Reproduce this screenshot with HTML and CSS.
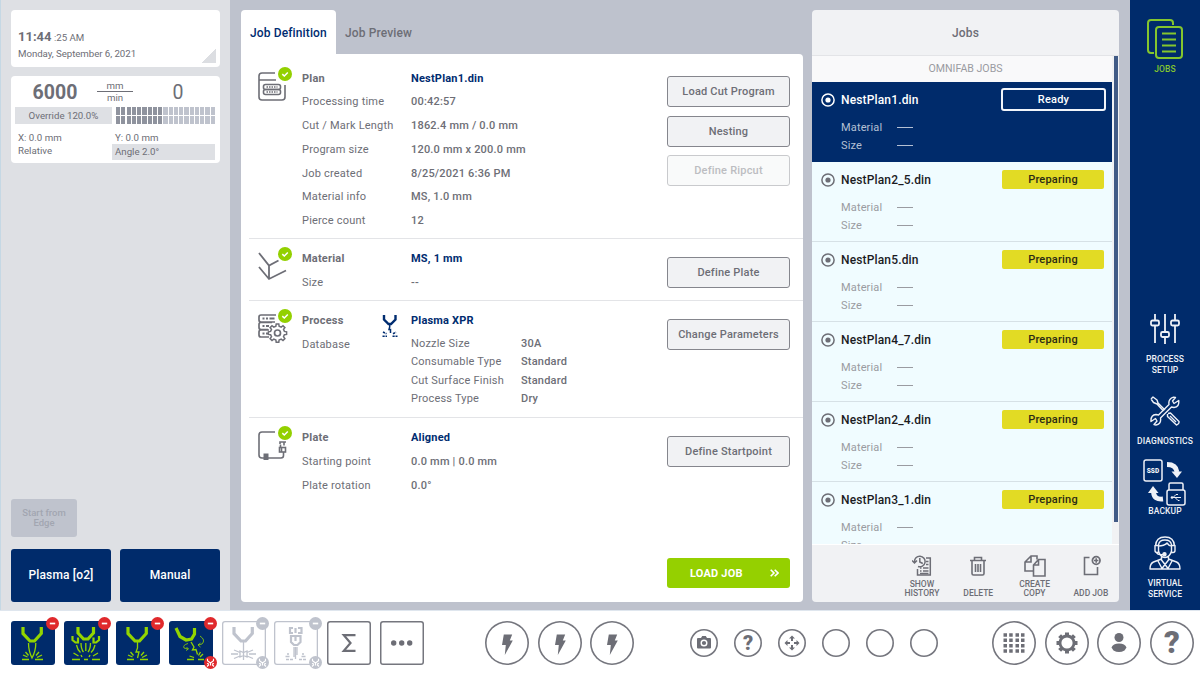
FILE: index.html
```
<!DOCTYPE html>
<html lang="en">
<head>
    <meta charset="UTF-8">
    <meta name="viewport" content="width=device-width, initial-scale=1.0">
    <title>Jobs</title>
    <link rel="stylesheet" href="styles.css">
</head>
<body>
    <svg class="defs" width="0" height="0">
        <symbol id="check" viewBox="0 0 14 14"><circle cx="7" cy="7" r="7" fill="#93d000"/><path d="M4.3 7.1l2 1.9 3.5-3.6" fill="none" stroke="#fff" stroke-width="1.5"/></symbol>
        <symbol id="radio" viewBox="0 0 14 14"><circle cx="7" cy="7" r="6.1" fill="none" stroke="currentColor" stroke-width="1.5"/><circle cx="7" cy="7" r="2.6" fill="currentColor"/></symbol>
        <symbol id="bolt" viewBox="0 0 44 44"><path d="M18.800 13.500H27.200L24.800 19.500H27.800L19.800 34L20.800 24H17Z" fill="currentColor"/></symbol>
        <symbol id="off" viewBox="0 0 13 13"><circle cx="6.500" cy="6.500" r="6.500" fill="currentColor"/><path d="M3.800 6.500h5.400" stroke="#fff" stroke-width="1.700"/></symbol>
        <symbol id="fault" viewBox="0 0 13 13"><circle cx="6.500" cy="6.500" r="6.500" fill="currentColor"/><path d="M3.500 2.800v2l3 2.200 3-2.200v-2M6.500 7v2.500M3 10.500l2-2M10 10.500l-2-2M3 7.500l2 .5M10 7.500l-2 .5" fill="none" stroke="#fff" stroke-width="1.100"/></symbol>
    </svg>

    <div class="main">
        <div class="left">
            <div class="card clock">
                <p><b>11:44</b> :25 AM</p>
                <p class="date">Monday, September 6, 2021</p>
                <span class="corner"></span>
            </div>
            <div class="card speed">
                <div class="speed-top">
                    <span class="set">6000</span>
                    <span class="unit"><i>mm</i><i>min</i></span>
                    <span class="actual">0</span>
                </div>
                <div class="speed-row">
                    <div class="override">Override 120.0%</div>
                    <div class="meter"><div></div><div></div></div>
                </div>
                <div class="coords">
                    <span>X: 0.0 mm</span><span>Y: 0.0 mm</span>
                    <span>Relative</span><span class="angle">Angle 2.0°</span>
                </div>
            </div>
            <button class="edge">Start from<br>Edge</button>
            <div class="modes">
                <button>Plasma [o2]</button>
                <button>Manual</button>
            </div>
        </div>

        <div class="center">
            <div class="job">
                <div class="tabs">
                    <div class="tab active">Job Definition</div>
                    <div class="tab">Job Preview</div>
                </div>
                <div class="panel">
                    <div class="section plan">
                        <div class="icon">
                            <svg width="30" height="32" viewBox="0 0 30 32" fill="none" stroke="#6d6e76" stroke-width="1.600"><path d="M17 1H4Q1 1 1 4V25Q1 28 4 28H24Q27 28 27 25V13M1 8H18"/><rect x="5.500" y="12.500" width="17" height="5" rx="2"/><rect x="5.500" y="17.500" width="17" height="5" rx="2"/><path d="M8.500 15h11M8.500 20h11" stroke-dasharray="1.500 1"/></svg>
                            <svg class="check"><use href="#check"/></svg>
                        </div>
                        <div class="labels"><b>Plan</b><span>Processing time</span><span>Cut / Mark Length</span><span>Program size</span><span>Job created</span><span>Material info</span><span>Pierce count</span></div>
                        <div class="values"><b>NestPlan1.din</b><span>00:42:57</span><span>1862.4 mm / 0.0 mm</span><span>120.0 mm x 200.0 mm</span><span>8/25/2021 6:36 PM</span><span>MS, 1.0 mm</span><span>12</span></div>
                        <div class="actions"><button>Load Cut Program</button><button>Nesting</button><button disabled>Define Ripcut</button></div>
                    </div>
                    <div class="section material">
                        <div class="icon">
                            <svg width="30" height="32" viewBox="0 0 30 32" fill="none" stroke="#6d6e76" stroke-width="1.800"><path d="M1 1L11 13.500L20.500 8.500M11 13.500V27M1 15L11 27L28 18.500"/></svg>
                            <svg class="check"><use href="#check"/></svg>
                        </div>
                        <div class="labels"><b>Material</b><span>Size</span></div>
                        <div class="values"><b>MS, 1 mm</b><span>--</span></div>
                        <div class="actions"><button>Define Plate</button></div>
                    </div>
                    <div class="section process">
                        <div class="icon">
                            <svg width="30" height="32" viewBox="0 0 30 32" fill="none" stroke="#6d6e76" stroke-width="1.700"><path d="M18 1H3Q1 1 1 3V6Q1 8 3 8H17M14 8.500H3Q1 8.500 1 10.500V13.500Q1 15.500 3 15.500H10M11 16H3Q1 16 1 18V21Q1 23 3 23H11"/><path d="M4.500 4.500h2M8 4.500h2M11.500 4.500h5M4.500 12h2M8 12h3M4.500 19.500h2M8 19.500h2" stroke-width="2.200"/><circle cx="19.500" cy="19" r="3"/><path d="M17.900 12.200L18.200 10h2.600l.3 2.200 2.100.9 1.800-1.400 1.900 1.900-1.400 1.800.9 2 2.200.4v2.600l-2.200.3-.9 2 1.400 1.900-1.900 1.900-1.800-1.400-2.100.9-.3 2.200h-2.600l-.3-2.200-2.100-.9-1.800 1.400-1.900-1.900 1.400-1.900-.9-2-2.200-.3v-2.600l2.200-.4.9-2-1.400-1.800 1.900-1.900 1.800 1.400z" stroke-width="1.500"/></svg>
                            <svg class="check"><use href="#check"/></svg>
                        </div>
                        <div class="labels"><b>Process</b><span>Database</span></div>
                        <div class="torch">
                            <svg width="16" height="24" viewBox="0 0 16 24" fill="none" stroke="#002c70"><path d="M2 1V5.500L6.500 10H9L13.500 5.500V1" stroke-width="2.400"/><path d="M7.700 10V13L7 15.500H8.500V19" stroke-width="1.500"/><path d="M1 18l3.500 1.800M.5 22.300h4.500M11 19.800l3-1.500M10.500 22.300h5" stroke-width="1.600" stroke-dasharray="2.200 .8"/></svg>
                        </div>
                        <div class="values">
                            <b>Plasma XPR</b>
                            <div class="params">
                                <i>Nozzle Size</i><span>30A</span>
                                <i>Consumable Type</i><span>Standard</span>
                                <i>Cut Surface Finish</i><span>Standard</span>
                                <i>Process Type</i><span>Dry</span>
                            </div>
                        </div>
                        <div class="actions"><button>Change Parameters</button></div>
                    </div>
                    <div class="section plate">
                        <div class="icon">
                            <svg width="30" height="32" viewBox="0 0 30 32" fill="none" stroke="#6d6e76" stroke-width="1.600"><path d="M17 1H4Q1 1 1 4V24Q1 27 4 27H6M10 27H23Q25.500 27 25.500 24.500V21M28 11H22V13M22.500 13.500v3M26 11.500v3"/><path d="M5.500 22.500h5v6.500h-5z" fill="#6d6e76" stroke="none"/><rect x="21.500" y="16.500" width="6" height="4.500"/><path d="M23.500 16.500v4.500"/></svg>
                            <svg class="check"><use href="#check"/></svg>
                        </div>
                        <div class="labels"><b>Plate</b><span>Starting point</span><span>Plate rotation</span></div>
                        <div class="values"><b>Aligned</b><span>0.0 mm | 0.0 mm</span><span>0.0°</span></div>
                        <div class="actions"><button>Define Startpoint</button></div>
                    </div>
                    <button class="load">LOAD JOB
                        <svg width="9" height="8" viewBox="0 0 9 8" fill="none" stroke="#fff" stroke-width="1.600"><path d="M.7.700L4 4L.7 7.300M4.700.700L8 4L4.700 7.300"/></svg>
                    </button>
                </div>
            </div>

            <div class="jobs">
                <div class="jobs-title">Jobs</div>
                <div class="jobs-body">
                    <div class="list">
                        <div class="group">OMNIFAB JOBS</div>
                        <div class="item selected">
                            <svg class="radio"><use href="#radio"/></svg><span class="name">NestPlan1.din</span><span class="status">Ready</span>
                            <div class="meta"><span>Material</span><hr><span>Size</span><hr></div>
                        </div>
                        <div class="item">
                            <svg class="radio"><use href="#radio"/></svg><span class="name">NestPlan2_5.din</span><span class="status">Preparing</span>
                            <div class="meta"><span>Material</span><hr><span>Size</span><hr></div>
                        </div>
                        <div class="item">
                            <svg class="radio"><use href="#radio"/></svg><span class="name">NestPlan5.din</span><span class="status">Preparing</span>
                            <div class="meta"><span>Material</span><hr><span>Size</span><hr></div>
                        </div>
                        <div class="item">
                            <svg class="radio"><use href="#radio"/></svg><span class="name">NestPlan4_7.din</span><span class="status">Preparing</span>
                            <div class="meta"><span>Material</span><hr><span>Size</span><hr></div>
                        </div>
                        <div class="item">
                            <svg class="radio"><use href="#radio"/></svg><span class="name">NestPlan2_4.din</span><span class="status">Preparing</span>
                            <div class="meta"><span>Material</span><hr><span>Size</span><hr></div>
                        </div>
                        <div class="item">
                            <svg class="radio"><use href="#radio"/></svg><span class="name">NestPlan3_1.din</span><span class="status">Preparing</span>
                            <div class="meta"><span>Material</span><hr><span>Size</span><hr></div>
                        </div>
                    </div>
                    <div class="scrollbar"></div>
                </div>
                <div class="tools">
                    <div class="tool">
                        <svg width="20" height="22" viewBox="0 0 20 22" fill="none" stroke="#6d6e76" stroke-width="1.500"><path d="M2.500 7A5.300 5.300 0 1 1 6 11.500M7.800 3v4l3 1.500M0 5.500l2.500 2.500L5 5.500M14 3h4.300V20H5.500v-6"/><path d="M14 6.500h2.500M14 9.500h2.500M8 13h1.500M11 13h5.500M8 16h1.500M11 16h5.500M8 18.500h8.500" stroke-width="1.700"/></svg>
                        <span>SHOW<br>HISTORY</span>
                    </div>
                    <div class="tool">
                        <svg width="20" height="22" viewBox="0 0 20 22" fill="none" stroke="#6d6e76" stroke-width="1.600"><path d="M2 5.500h16M6.500 5V2.500h7V5M4 6V18.500q0 1.500 1.500 1.500h9q1.500 0 1.500-1.500V6M7.500 9v8M10 9v8M12.500 9v8"/></svg>
                        <span>DELETE</span>
                    </div>
                    <div class="tool">
                        <svg width="22" height="22" viewBox="0 0 22 22" fill="none" stroke="#6d6e76" stroke-width="1.600"><path d="M9 16H1V7L7 1h6v3.500M7 1v6H1"/><path d="M14.500 4.500H21V21H9.500V10z M14.500 4.500v5.500H9.500" fill="#f1f2f4"/></svg>
                        <span>CREATE<br>COPY</span>
                    </div>
                    <div class="tool">
                        <svg width="20" height="22" viewBox="0 0 20 22" fill="none" stroke="#6d6e76" stroke-width="1.600"><path d="M8.500 2.500H3.500V19.500H16.500V12"/><circle cx="15.200" cy="5.500" r="3.800" stroke-width="1.800"/><path d="M15.200 3.300v4.400M13 5.500h4.400"/></svg>
                        <span>ADD JOB</span>
                    </div>
                </div>
            </div>
        </div>

        <div class="nav">
            <div class="nav-item current">
                <svg width="36" height="40" viewBox="0 0 36 40" fill="none" stroke="#84c62e" stroke-width="2"><path d="M7 34H4Q1 34 1 31V4Q1 1 4 1H23Q26 1 26 4V6"/><rect x="9" y="8" width="26" height="31" rx="3"/><path d="M15 14.500h14M15 20.500h14M15 26.500h14M15 32.500h14"/></svg>
                <span>JOBS</span>
            </div>
            <div class="nav-item setup">
                <svg width="30" height="32" viewBox="0 0 30 32" fill="none" stroke="#eef1f7" stroke-width="1.800"><path d="M5 1v6M5 13v17M15 1v18M15 25v6M25 1v6M25 13v17"/><rect x="1" y="7.500" width="8" height="5" rx="1.500"/><rect x="11" y="19" width="8" height="5" rx="1.500"/><rect x="21" y="7.500" width="8" height="5" rx="1.500"/></svg>
                <span>PROCESS<br>SETUP</span>
            </div>
            <div class="nav-item diag">
                <svg width="30" height="30" viewBox="0 0 30 30" fill="none" stroke="#eef1f7" stroke-width="1.400" stroke-linejoin="round"><path d="M19 8.500Q18 3 23.500 1.200L25.500 1.500L22.500 5L24 7.500L28.700 4.500Q29.500 11 24 11.500L21.500 11L10.500 22Q11.500 28 6 29L4 28.500L7 25L5.500 22.500L1 25.500Q.5 19 6 18.500L8.500 19z"/><path d="M1 3L3 1L7 4L8 7L15 14M1 3L3.500 6.500L7 8L13.500 15M18 17.500L20.500 17L29 25.500Q29.500 28 26.500 29L17.500 20.500V18M20 20L26 26"/></svg>
                <span>DIAGNOSTICS</span>
            </div>
            <div class="nav-item backup">
                <svg width="44" height="48" viewBox="0 0 44 48" fill="none" stroke="#eef1f7" stroke-width="1.500"><rect x="1" y="1" width="18" height="21" rx="2"/><text x="10" y="14" class="ssd">SSD</text><path d="M24 5.500Q33 5.500 34 13" stroke-width="4.800"/><path d="M28.500 12.500H39L34 19z" fill="#eef1f7" stroke="none"/><path d="M20 40Q11 41 10.500 33" stroke-width="4.800"/><path d="M5 34h10.500L10 27z" fill="#eef1f7" stroke="none"/><rect x="24" y="31" width="18" height="15" rx="2"/><path d="M26 31V25.500Q26 24 27.500 24H38.500Q40 24 40 25.500V31"/><path d="M28 38.500h10M30 38.500l3-3h2M32 38.500l3 3h1.500" stroke-width="1"/><circle cx="29" cy="38.500" r="1.300" fill="#eef1f7" stroke="none"/></svg>
                <span>BACKUP</span>
            </div>
            <div class="nav-item virtual">
                <svg width="32" height="34" viewBox="0 0 32 34" fill="none" stroke="#eef1f7" stroke-width="1.400" stroke-linejoin="round"><path d="M6.500 10Q7 1 16 1Q25 1 25.500 10M9.500 9Q10 4 16 4Q22 4 22.500 9M6 9.500h3.500v7H8Q6 16.500 6 14.500zM26 9.500h-3.500v7H24Q26 16.500 26 14.500zM9.500 10Q15 10 18 7Q20 10 22.500 10V15Q21 21 16 21.500Q11 21 9.500 15M7.500 17Q9 19.500 14 18.500M12.500 20v4L16 28.500L19.500 24v-4M12.500 23L4.500 26Q1 27.500 1 33H31Q31 27.500 27.500 26L19.500 23M9 25l4 7.500L16 28.500L19 32.500L23 25"/><circle cx="15.500" cy="18.200" r="1.500" fill="#eef1f7"/></svg>
                <span>VIRTUAL<br>SERVICE</span>
            </div>
        </div>
    </div>

    <div class="bottom">
        <div class="tiles">
            <div class="tile">
                <svg viewBox="0 0 44 44"><path class="body" d="M12 6V12.500L19 20H23.500L30.300 12.500V6"/><path d="M17.500 22Q17.500 30 21 37Q24.800 30 24.800 22M14.500 31l3 3.500M28 31l-3 3.500M12 34l4.500 2M31 34L26 36.500"/><path class="spark" d="M11 38.500h7M24 38.500h8"/></svg>
                <svg class="badge"><use href="#off"/></svg>
            </div>
            <div class="tile">
                <svg viewBox="0 0 44 44"><path class="body" d="M14 6V12L19.500 18H24L29.500 12V6"/><path class="fin" d="M8.500 15v4l3 2.500h2.500v-5M35 15v4l-3 2.500h-2.500v-5"/><path d="M12.500 24q1 5 4 7.500M17 22q0 6 2.500 9M21.800 22v8M26.500 22q0 6-2.500 9M31 24q-1 5-4 7.500M9.500 32l5 3M34 32l-5 3M17 34l1 2M26 34l-1 2"/><path class="spark" d="M8 38.500h8M20 38.500h4M28 38.500h8"/></svg>
                <svg class="badge"><use href="#off"/></svg>
            </div>
            <div class="tile">
                <svg viewBox="0 0 44 44"><path class="body" d="M12 6V12.500L19 20H23.500L30.300 12.500V6"/><path d="M21.500 21v6l-1.500 4h3L21.500 37M14.500 31l3 3.500M28 31l-3 3.500M12 34l4.500 2M31 34L26 36.500"/><path class="spark" d="M11 38.500h7M24 38.500h8"/></svg>
                <svg class="badge"><use href="#off"/></svg>
            </div>
            <div class="tile">
                <svg viewBox="0 0 44 44"><path class="body" d="M7 7L11 15.500L17 19L22.500 18L25.500 13V7"/><path d="M22 21l3 5-1.500 3 3.500-.5 1.500 5M31.500 31l-2 3.500M20.500 35l4.500 1.500M34 33l-3 3"/><path class="spark" d="M18 38.500h7M29 38.500h6"/><path class="thin" d="M19 22.500q-5.500 1.500-4 4.500l4 1M31 15q6 4 2 8l-4 1M31.500 22l-2.500 2 2.500 2M17.500 26l2 2-2.500 1.500"/></svg>
                <svg class="badge"><use href="#off"/></svg>
                <svg class="badge low"><use href="#fault"/></svg>
            </div>
            <div class="tile dim">
                <svg viewBox="0 0 44 44"><path class="body" d="M12 6V12.500L19 20H23.500L30.300 12.500V6"/><path d="M21.500 21v18M9 33h7M27 33h7M12 29l6 2.500M31 29l-6 2.500M12 37.500l6-2.500M31 37.500l-6-2.500M18 30l3.500 1.500 3.500-1.500v6l-3.500-1.500-3.500 1.500z"/></svg>
                <svg class="badge"><use href="#off"/></svg>
                <svg class="badge low"><use href="#fault"/></svg>
            </div>
            <div class="tile dim">
                <svg viewBox="0 0 44 44"><path class="fin" d="M19 7h-3v5h3M24 7h3.500v5H24M21.500 7v5M17 15v6l3 3h3.500l3-3v-6zM21.500 15v5"/><path d="M20 26v10M23 26v8M21.500 26v12M13 33h2M11.500 35.500h4M28 33h2M27.500 35.500h4"/><path class="spark" d="M12 38.500h7M25 38.500h7" stroke-dasharray="3 1"/></svg>
                <svg class="badge"><use href="#off"/></svg>
                <svg class="badge low"><use href="#fault"/></svg>
            </div>
            <div class="tile plain">
                <svg viewBox="0 0 44 44"><path class="sigma" d="M28.500 14.200H16.800L23.500 22L16.800 29.800H28.500"/></svg>
            </div>
            <div class="tile plain">
                <svg viewBox="0 0 44 44" class="dots"><circle cx="13.700" cy="22" r="2.700"/><circle cx="21.700" cy="22" r="2.700"/><circle cx="29.700" cy="22" r="2.700"/></svg>
            </div>
        </div>
        <div class="rounds bolts">
            <div class="round"><svg><use href="#bolt"/></svg></div>
            <div class="round"><svg><use href="#bolt"/></svg></div>
            <div class="round"><svg><use href="#bolt"/></svg></div>
        </div>
        <div class="smalls">
            <div class="small"><svg viewBox="0 0 28 28" fill="#6d6e76"><path d="M7 10q0-1 1-1h3l1.200-2h3.600L17 9h3q1 0 1 1v8.500q0 1-1 1H8q-1 0-1-1z"/><circle cx="14" cy="14" r="2.800" fill="none" stroke="#fff" stroke-width="1.400"/></svg></div>
            <div class="small">?</div>
            <div class="small"><svg viewBox="0 0 28 28" fill="#6d6e76"><path d="M14 6.500l3 3h-2v2.500h-2V9.500h-2zM14 21.500l-3-3h2V16h2v2.500h2zM6.500 14l3-3v2H12v2H9.500v2zM21.500 14l-3 3v-2H16v-2h2.500v-2z"/></svg></div>
            <div class="small"></div>
            <div class="small"></div>
            <div class="small"></div>
        </div>
        <div class="rounds system">
            <div class="round"><svg viewBox="0 0 44 44"><path d="M11.500 14h3.500M17.200 14h3.500M23.500 14h3.500M29 14h3.500M11.500 19.300h3.500M17.200 19.300h3.500M23.500 19.300h3.500M29 19.300h3.500M11.500 24.700h3.500M17.200 24.700h3.500M23.500 24.700h3.500M29 24.700h3.500M11.500 30h3.500M17.200 30h3.500M23.500 30h3.500M29 30h3.500" stroke="#6d6e76" stroke-width="3.500"/></svg></div>
            <div class="round"><svg viewBox="0 0 44 44" fill="none" stroke="#6d6e76"><circle cx="22" cy="22" r="7" stroke-width="2.800"/><path d="M22 11.500v3M22 29.500v3M11.500 22h3M29.500 22h3M14.600 14.600l2.100 2.100M27.300 27.300l2.100 2.100M14.600 29.400l2.100-2.100M27.300 16.700l2.100-2.100" stroke-width="4"/></svg></div>
            <div class="round"><svg viewBox="0 0 44 44" fill="#6d6e76"><circle cx="22" cy="16.500" r="4.500"/><path d="M14.500 26.500Q16 22.500 22 22.500Q28 22.500 29.500 26.500L27.500 29.500Q22 32.500 16.500 29.500z"/></svg></div>
            <div class="round help">?</div>
        </div>
    </div>
</body>
</html>
```

FILE: styles.css
```
* {
    box-sizing: border-box;
}
body {
    margin: 0;
    width: 1200px;
    height: 675px;
    overflow: hidden;
    background: #fff;
    color: #6d6e76;
    font-family: Roboto, "Liberation Sans", sans-serif;
    font-size: 11px;
}
p {
    margin: 0;
}
i {
    font-style: normal;
}
button {
    font-family: inherit;
    padding: 0;
    border: none;
    border-radius: 3px;
    cursor: pointer;
}
.defs {
    position: absolute;
}
.main {
    display: flex;
    height: 610px;
}

/* left column */
.left {
    width: 230px;
    height: 610px;
    padding: 10px 10px 8px 10px;
    border-left: 1px solid #c5d8e4;
    background: #dee0e4;
    display: flex;
    flex-direction: column;
}
.card {
    background: #fff;
    border-radius: 4px;
}
.clock {
    position: relative;
    height: 57px;
    padding: 18px 7px 0;
    font-size: 9.700px;
}
.clock p {
    line-height: 17px;
}
.clock .date {
    line-height: 15px;
    letter-spacing: -0.05px;
}
.clock b {
    font-size: 13px;
}
.corner {
    position: absolute;
    right: 4px;
    bottom: 4px;
    width: 14px;
    height: 14px;
    background: linear-gradient(135deg, transparent 50%, #dcdee2 50%);
}
.speed {
    height: 87px;
    margin-top: 9px;
    padding: 0 4px;
    font-size: 9.700px;
}
.speed-top {
    display: grid;
    grid-template-columns: 82px 36px 83px;
    height: 31px;
    align-items: center;
    text-align: center;
}
.set {
    padding: 2px 2px 0 0;
    font-size: 19.500px;
    font-weight: 700;
}
.actual {
    font-size: 19.500px;
    padding: 2px 0 0 7px;
}
.unit {
    padding-top: 1px;
}
.unit i {
    display: block;
    line-height: 12px;
}
.unit i:first-child {
    line-height: 11px;
    border-bottom: 1px solid #6d6e76;
}
.speed-row {
    display: flex;
    justify-content: space-between;
}
.override {
    width: 97px;
    height: 17px;
    line-height: 17px;
    text-align: center;
    background: #dee0e4;
}
.meter {
    width: 100px;
}
.meter div {
    height: 8px;
    margin-bottom: 1px;
    background: repeating-linear-gradient(to right, transparent 0 4.2px, #fff 4.2px 5.26px), linear-gradient(to right, #8f939e 47.5%, #bfc3cd 47.5%);
}
.coords {
    display: grid;
    grid-template-columns: 97px 103px;
    grid-template-rows: 12px 16px;
    line-height: 12px;
    margin-top: 7px;
}
.coords span {
    padding-left: 3px;
}
.coords span:nth-child(3) {
    line-height: 14px;
}
.coords .angle {
    line-height: 15px;
    height: 16px;
    background: #dee0e4;
}
.edge {
    width: 66px;
    height: 38px;
    margin-top: auto;
    background: #bfc3cd;
    color: #a2a6b1;
    font-size: 9.5px;
    font-weight: 500;
    line-height: 10px;
}
.modes {
    display: flex;
    justify-content: space-between;
    margin-top: 12px;
}
.modes button {
    width: 100px;
    height: 53px;
    padding-bottom: 2px;
    background: #002b6b;
    color: #fff;
    font-size: 12px;
    font-weight: 500;
    letter-spacing: 0.15px;
}

/* center */
.center {
    flex: 1;
    display: flex;
    justify-content: space-between;
    padding: 10px 11px 8px 11px;
    background: #bec2cd;
}
.job {
    width: 562px;
}
.tabs {
    display: flex;
    height: 44px;
}
.tab {
    padding: 0 9px;
    line-height: 46px;
    font-size: 12px;
    font-weight: 500;
    letter-spacing: 0.130px;
}
.tab.active {
    width: 95px;
    background: #fff;
    border-radius: 4px 4px 0 0;
    color: #002c70;
}
.panel {
    position: relative;
    height: 548px;
    background: #fff;
    border-radius: 0 4px 4px 4px;
}
.section {
    display: flex;
    margin-left: 8px;
    padding: 8px 13px 0 9px;
    border-bottom: 1px solid #e3e4e7;
    letter-spacing: 0.2px;
}
.plan {
    height: 185px;
    padding-top: 12.500px;
}
.material {
    height: 62px;
}
.process {
    height: 117px;
}
.plate {
    height: 140px;
    border: none;
}
.icon {
    position: relative;
    width: 44px;
    padding-top: 5px;
}
.icon svg {
    display: block;
}
.icon .check {
    position: absolute;
    left: 20px;
    top: 0;
    width: 14px;
    height: 14px;
}
.labels, .values {
    line-height: 23.800px;
}
.labels {
    width: 109px;
}
.values {
    flex: 1;
    font-weight: 500;
}
.labels > *, .values > * {
    display: block;
}
.labels b {
    font-weight: 700;
}
.values b {
    font-weight: 700;
    color: #002c70;
}
.process .labels {
    width: 80px;
}
.torch {
    width: 29px;
    padding-top: 5px;
}
.values .params {
    display: grid;
    grid-template-columns: 110px 1fr;
    line-height: 18.500px;
    padding-top: 2px;
}
.params i {
    font-weight: 400;
}
.actions {
    display: flex;
    flex-direction: column;
    gap: 8.500px;
    padding-top: 9.700px;
}
.plan .actions {
    padding-top: 9.500px;
}
.actions button {
    width: 123px;
    height: 31px;
    border: 1px solid #85868d;
    background: #f1f2f4;
    color: #6d6e76;
    font-size: 11px;
    font-weight: 500;
    letter-spacing: 0.2px;
}
.actions button:disabled {
    border-color: #c9cacd;
    background: #f9fafa;
    color: #bcbdc1;
}
.load {
    position: absolute;
    right: 13px;
    bottom: 14px;
    display: flex;
    align-items: center;
    justify-content: space-between;
    width: 123px;
    height: 30px;
    padding: 0 11px 0 23px;
    background: #95d000;
    color: #fff;
    font-size: 11px;
    font-weight: 700;
    letter-spacing: 0.2px;
}

/* job list */
.jobs {
    width: 307px;
    border-radius: 4px;
    overflow: hidden;
    background: #f1f2f4;
}
.jobs-title {
    height: 46px;
    line-height: 46px;
    text-align: center;
    font-size: 12px;
    font-weight: 500;
    letter-spacing: 0.15px;
    border-bottom: 1px solid #e3e4e7;
}
.jobs-body {
    display: flex;
    height: 489px;
    border-bottom: 1px solid #fff;
}
.list {
    width: 300px;
    overflow: hidden;
}
.group {
    height: 26px;
    line-height: 26px;
    padding-left: 7px;
    text-align: center;
    background: #f9f9fa;
    color: #9a9ba1;
    font-size: 10.600px;
}
.item {
    display: grid;
    grid-template-columns: 20.500px 1fr 102px;
    grid-template-rows: 35px 1fr;
    align-items: center;
    height: 80px;
    padding: 0 8px 0 8.500px;
    border-bottom: 1px solid #d6e1e6;
    background: #f0fcff;
}
.radio {
    width: 14px;
    height: 14px;
}
.name {
    font-size: 12px;
    font-weight: 500;
    color: #1b1b1f;
    letter-spacing: 0.150px;
}
.status {
    height: 19px;
    line-height: 19px;
    text-align: center;
    background: #e2db24;
    border-radius: 2px;
    color: #2b2a14;
    font-weight: 500;
    letter-spacing: 0.2px;
}
.meta {
    grid-column: 2 / 4;
    align-self: start;
    display: grid;
    grid-template-columns: 56px 16px;
    align-items: center;
    line-height: 17.700px;
    padding-top: 2px;
    color: #9a9ba1;
    letter-spacing: 0.15px;
}
.meta hr {
    width: 16px;
    margin: 0;
    border: none;
    border-top: 1px solid #9a9ba1;
}
.selected {
    background: #002b6b;
    color: #fff;
    border-color: #002b6b;
}
.selected .name {
    color: #fff;
}
.selected .status {
    height: 23px;
    margin: 0 -2px 0 -1px;
    background: none;
    border: 2px solid #f1f5fa;
    border-radius: 3px;
    color: #fff;
}
.selected .meta {
    color: #b4c0d4;
}
.selected hr {
    border-color: #b4c0d4;
}
.scrollbar {
    width: 4px;
    height: 466px;
    margin-left: 2px;
    background: #415b86;
}
.tools {
    display: flex;
    justify-content: flex-end;
    height: 57px;
}
.tool {
    display: flex;
    flex-direction: column;
    align-items: center;
    justify-content: space-between;
    width: 56.300px;
    padding: 10px 0 4px;
    font-size: 8.500px;
    font-weight: 500;
    line-height: 9px;
    text-align: center;
}

/* navigation */
.nav {
    width: 70px;
    padding-top: 19px;
    background: #002b6b;
}
.nav-item {
    display: flex;
    flex-direction: column;
    align-items: center;
    color: #eef1f7;
    font-size: 8.500px;
    font-weight: 500;
    line-height: 11px;
    text-align: center;
    letter-spacing: 0.1px;
}
.nav-item span {
    margin-top: auto;
}
.current {
    height: 56px;
    color: #84c62e;
}
.setup {
    height: 63px;
    margin-top: 238px;
}
.diag {
    height: 51px;
    margin-top: 20px;
}
.backup {
    height: 58px;
    margin-top: 12px;
}
.backup svg {
    margin-bottom: -2px;
}
.virtual {
    height: 64px;
    margin-top: 19px;
}
.ssd {
    fill: #eef1f7;
    stroke: none;
    font-size: 6.500px;
    font-weight: 900;
    text-anchor: middle;
}

/* bottom bar */
.bottom {
    display: flex;
    align-items: center;
    height: 65px;
    padding: 0 6px 1px 11px;
    border-top: 1px solid #dfe6ee;
}
.tiles, .rounds {
    display: flex;
    gap: 8.700px;
}
.tile {
    position: relative;
    width: 44px;
    height: 44px;
    border-radius: 3px;
    background: #002b6b;
    color: #e0292c;
}
.tile svg {
    display: block;
    width: 44px;
    height: 44px;
    fill: none;
    stroke: #93d500;
    stroke-width: 1.300;
}
.tile .body {
    stroke-width: 3.200;
}
.tile .fin {
    stroke-width: 2.200;
}
.tile .spark {
    stroke-width: 1.700;
}
.tile .thin {
    stroke-width: 0.800;
}
.tile .badge {
    position: absolute;
    left: 34.500px;
    top: -4px;
    width: 13px;
    height: 13px;
    stroke: none;
}
.tile .badge.low {
    top: 35px;
}
.dim {
    background: #fff;
    color: #bfc3cd;
    box-shadow: inset 0 0 0 1.300px #bfc3cd;
}
.tile.dim svg {
    stroke: #bfc3cd;
}
.tile.dim .badge {
    stroke: none;
}
.plain {
    background: #fff;
    box-shadow: inset 0 0 0 1.500px #75767e;
}
.tile .sigma {
    stroke: #6d6e76;
    stroke-width: 2.200;
}
.tile .dots {
    fill: #6d6e76;
    stroke: none;
}
.bolts {
    margin-left: 61px;
}
.round, .small {
    box-shadow: inset 0 0 0 1.600px #75767e;
    border-radius: 50%;
    color: #6d6e76;
    display: flex;
    align-items: center;
    justify-content: center;
}
.round {
    width: 44px;
    height: 44px;
}
.round svg {
    width: 44px;
    height: 44px;
    flex-shrink: 0;
}
.smalls {
    display: flex;
    gap: 16px;
    margin-left: 56px;
}
.small {
    width: 28px;
    height: 28px;
    font-size: 20px;
    font-weight: 900;
}
.small svg {
    width: 28px;
    height: 28px;
    flex-shrink: 0;
}
.system {
    margin-left: auto;
}
.help {
    font-size: 31px;
    font-weight: 900;
}
```
